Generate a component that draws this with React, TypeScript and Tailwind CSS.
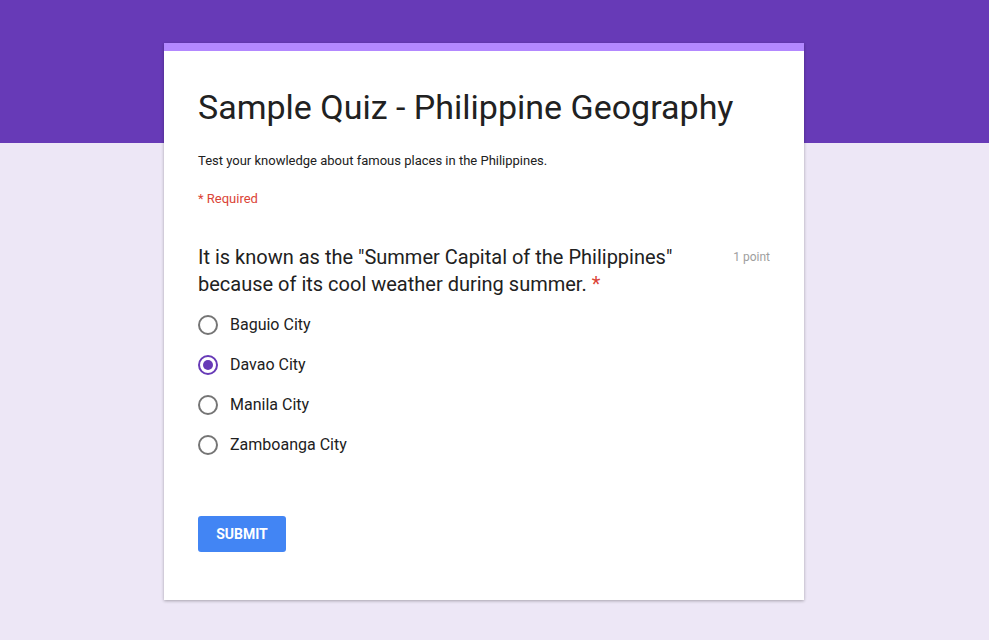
import React from "react";

const options = ["Baguio City", "Davao City", "Manila City", "Zamboanga City"];

export default function App() {
  return (
    <div className="relative min-h-[640px] w-full bg-[#ede7f6]" style={{ fontFamily: "Roboto, 'Liberation Sans', sans-serif" }}>
      <div className="absolute left-0 top-0 h-[143px] w-full bg-[#673ab7]" />
      <div className="relative flex pl-[164px] pt-[43px]">
        <div className="w-[640px] border-t-8 border-[#b388ff] bg-white px-[34px] pb-[48px] shadow-[0_1px_3px_rgba(0,0,0,0.3)]">
          <h1 className="mt-[36px] text-[34px] leading-[40px] text-[#212121]">Sample Quiz - Philippine Geography</h1>
          <p className="mt-[25px] text-[13px] leading-[18px] text-[#212121]">Test your knowledge about famous places in the Philippines.</p>
          <p className="mt-[20px] text-[13px] leading-[18px] text-[#db4437]">* Required</p>
          <div className="mt-[36px] flex justify-between">
            <div className="w-[500px] text-[20px] leading-[27px] text-[#212121]">
              It is known as the "Summer Capital of the Philippines" because of its cool weather during summer. <span className="text-[#db4437]">*</span>
            </div>
            <div className="pt-[4px] text-[12px] leading-[18px] text-[#9e9e9e]">1 point</div>
          </div>
          <div className="mt-[7px] flex flex-col">
            {options.map((o, i) => (
              <div key={o} className="flex h-[40px] items-center gap-[12px]">
                {i === 1 ? (
                  <div className="flex h-[20px] w-[20px] items-center justify-center rounded-full border-2 border-[#673ab7]">
                    <div className="h-[10px] w-[10px] rounded-full bg-[#673ab7]" />
                  </div>
                ) : (
                  <div className="h-[20px] w-[20px] rounded-full border-2 border-[#757575]" />
                )}
                <span className="text-[16px] text-[#212121]">{o}</span>
              </div>
            ))}
          </div>
          <button className="mt-[51px] h-[36px] w-[88px] rounded-[3px] bg-[#4285f4] text-[14px] font-bold uppercase text-white">Submit</button>
        </div>
      </div>
    </div>
  );
}
